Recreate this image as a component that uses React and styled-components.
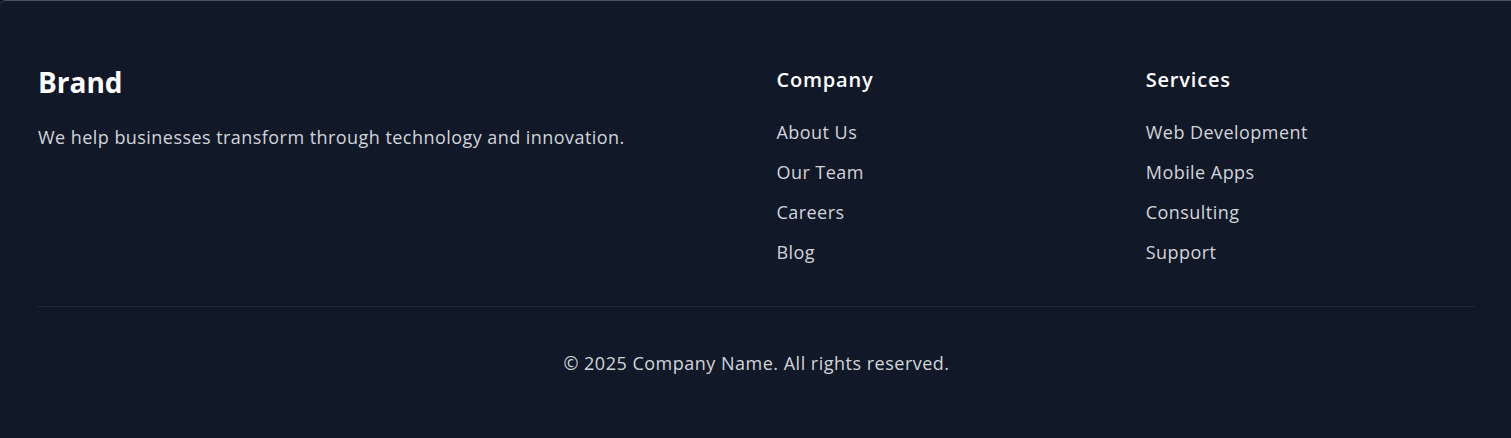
import styled, { createGlobalStyle } from "styled-components";

const GlobalStyle = createGlobalStyle`
  html, body {
    margin: 0;
    padding: 0;
    background: #111827;
  }
  body {
    font-family: "Segoe UI", "Open Sans", "Noto Sans", sans-serif;
  }
  * {
    box-sizing: border-box;
  }
`;

const Footer = styled.footer`
  background: #111827;
  color: #d1d5db;
  border-top: 1px solid #4b5563;
  border-top-left-radius: 6px;
  padding: 63px 36px 60px 38px;
  min-height: 438px;
`;

const Grid = styled.div`
  display: grid;
  grid-template-columns: repeat(4, 1fr);
  gap: 40px;
`;

const BrandColumn = styled.div`
  grid-column: span 2;
`;

const BrandName = styled.h2`
  margin: 0 0 23px;
  font-size: 28px;
  line-height: 36px;
  font-weight: 700;
  color: #ffffff;
`;

const Description = styled.p`
  margin: 0;
  font-size: 18px;
  line-height: 28px;
  letter-spacing: 0.45px;
`;

const ColumnTitle = styled.h3`
  margin: 2px 0 24px;
  font-size: 20px;
  line-height: 28px;
  font-weight: 600;
  letter-spacing: 0.8px;
  color: #ffffff;
`;

const LinkList = styled.ul`
  list-style: none;
  margin: 0;
  padding: 0;
  display: flex;
  flex-direction: column;
  gap: 12px;
`;

const LinkItem = styled.a`
  display: block;
  color: #d1d5db;
  text-decoration: none;
  font-size: 18px;
  line-height: 28px;
  letter-spacing: 0.45px;
`;

const Bottom = styled.div`
  margin-top: 40px;
  border-top: 1px solid #1f2937;
  padding-top: 42px;
  text-align: center;
`;

const Copyright = styled.p`
  margin: 0;
  font-size: 18px;
  line-height: 28px;
  letter-spacing: 0.5px;
`;

const columns = [
  { title: "Company", links: ["About Us", "Our Team", "Careers", "Blog"] },
  { title: "Services", links: ["Web Development", "Mobile Apps", "Consulting", "Support"] },
];

export default function App() {
  return (
    <>
      <GlobalStyle />
      <Footer>
        <Grid>
          <BrandColumn>
            <BrandName>Brand</BrandName>
            <Description>We help businesses transform through technology and innovation.</Description>
          </BrandColumn>
          {columns.map((col) => (
            <div key={col.title}>
              <ColumnTitle>{col.title}</ColumnTitle>
              <LinkList>
                {col.links.map((link) => (
                  <li key={link}>
                    <LinkItem href="#">{link}</LinkItem>
                  </li>
                ))}
              </LinkList>
            </div>
          ))}
        </Grid>
        <Bottom>
          <Copyright>© 2025 Company Name. All rights reserved.</Copyright>
        </Bottom>
      </Footer>
    </>
  );
}
